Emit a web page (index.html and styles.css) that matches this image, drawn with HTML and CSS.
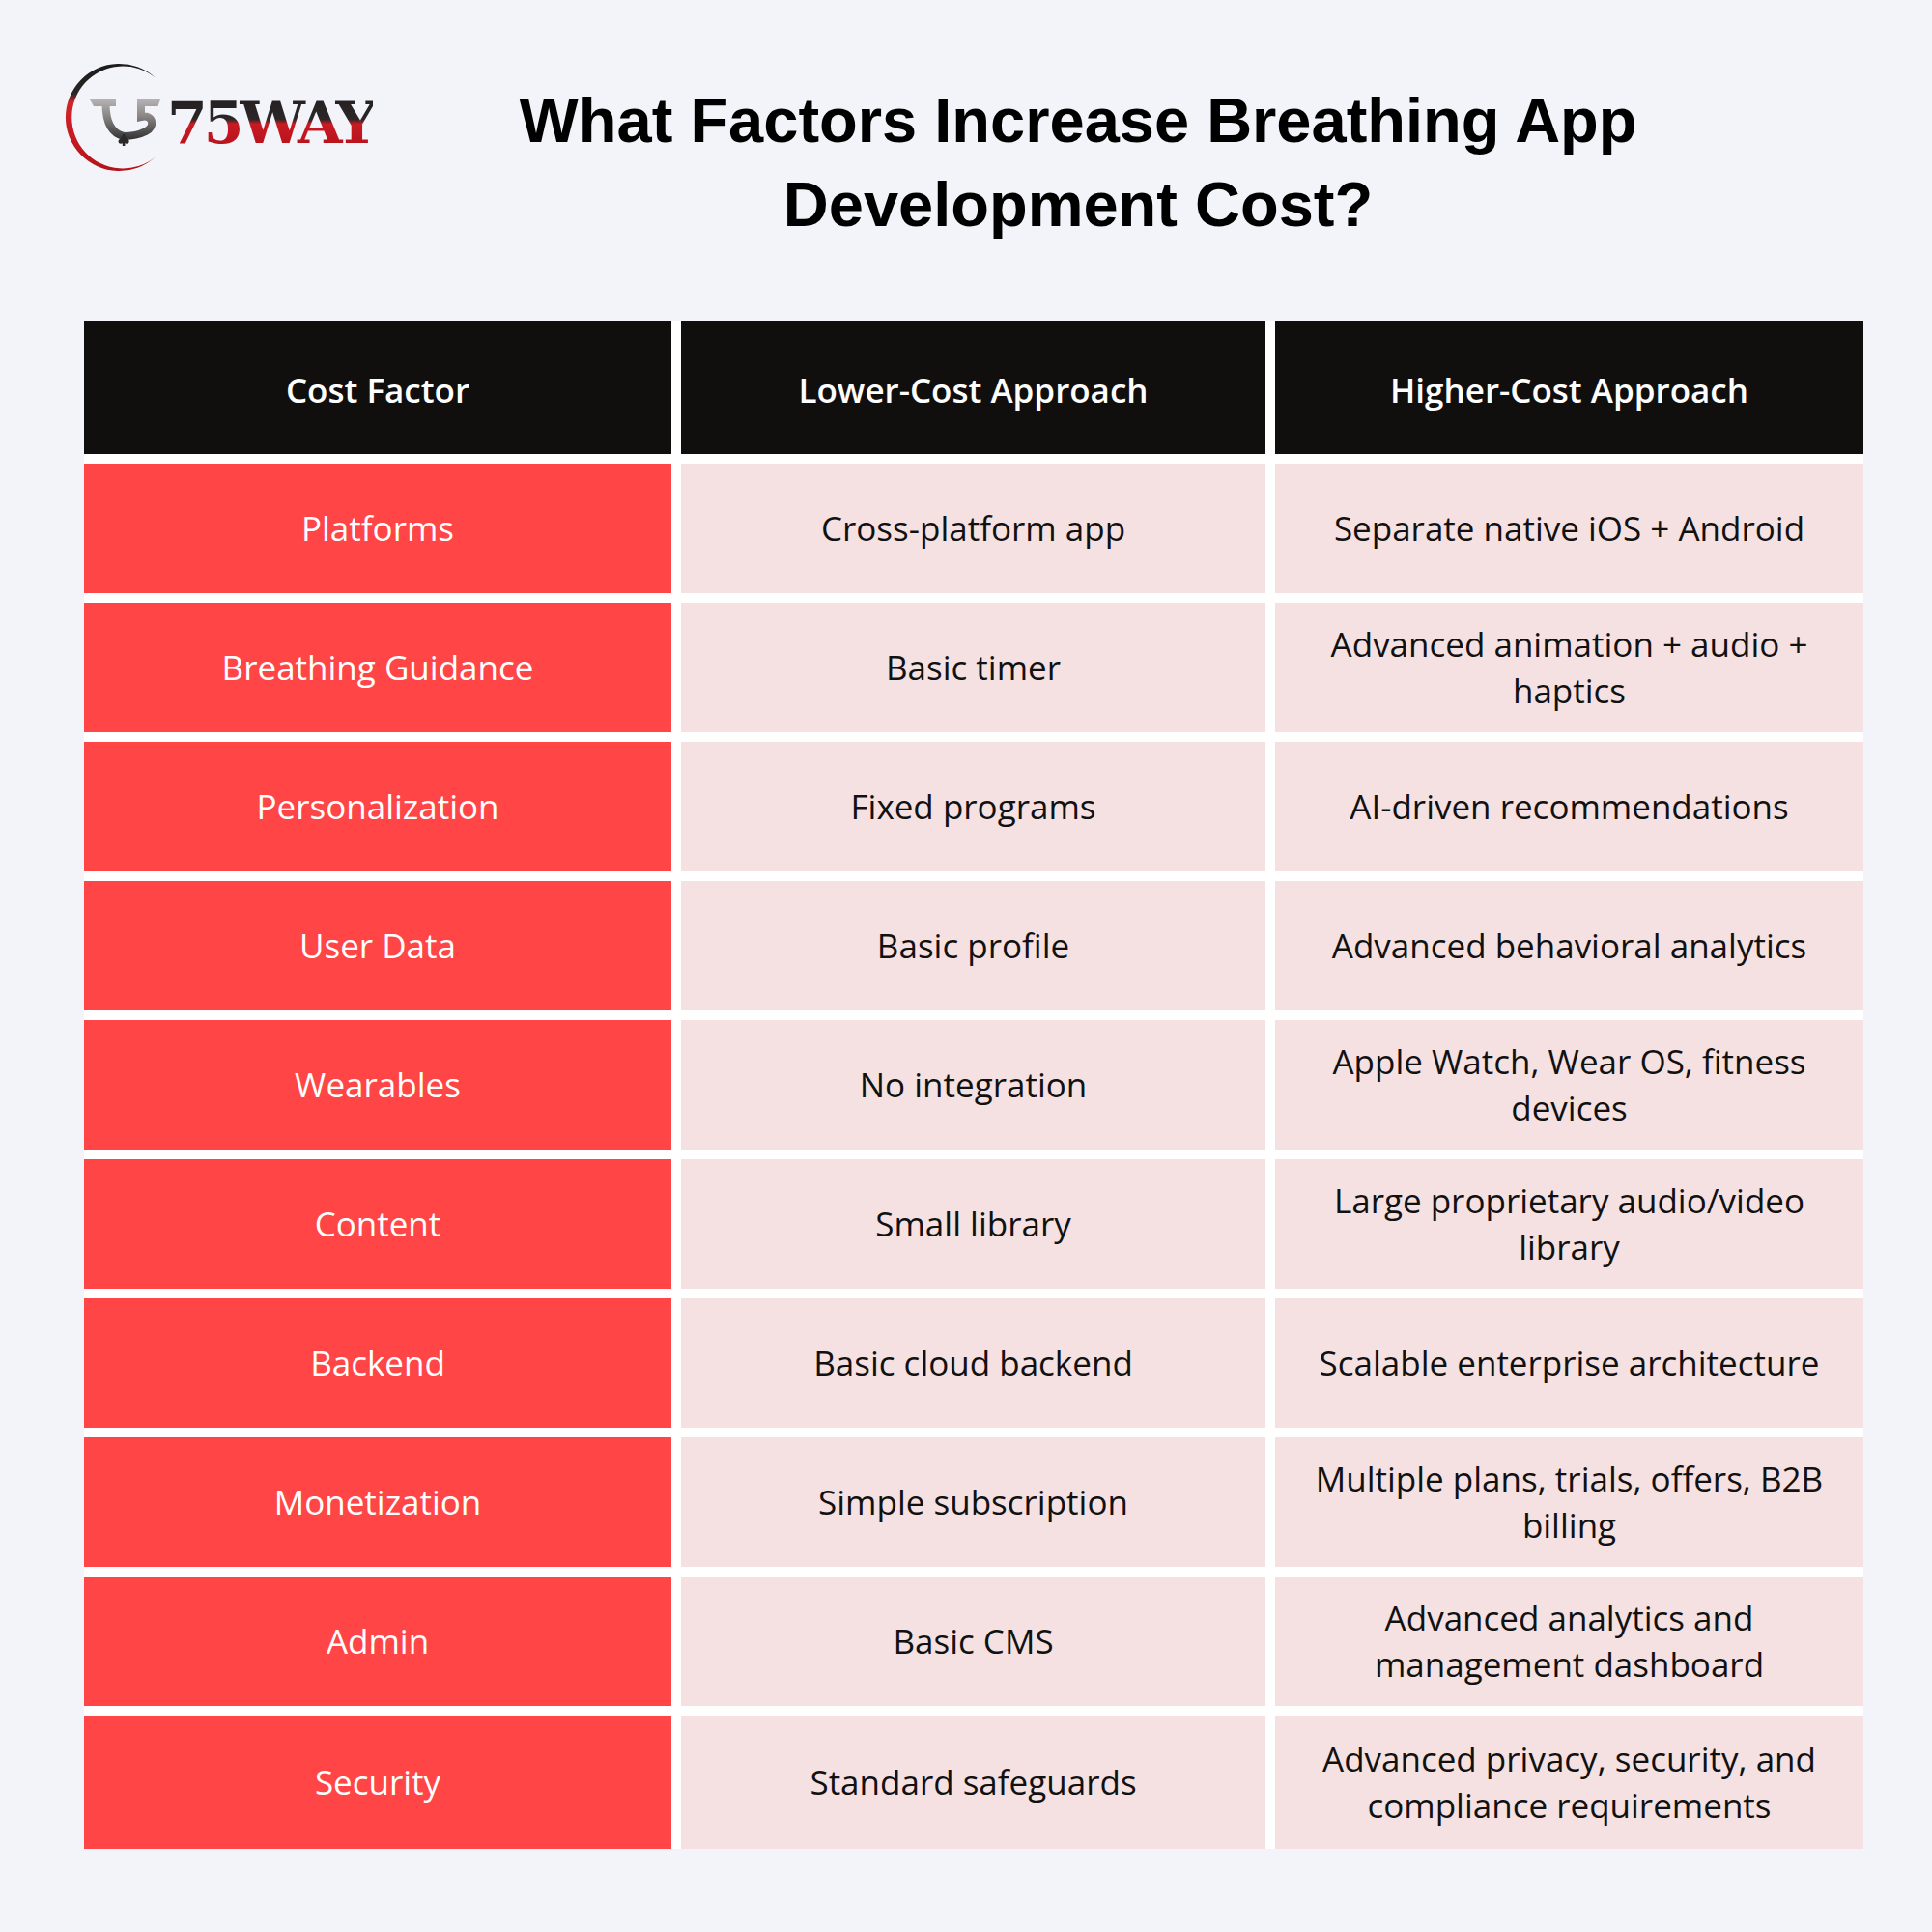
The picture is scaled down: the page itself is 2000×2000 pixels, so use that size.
FILE: index.html
```html
<!DOCTYPE html>
<html lang="en">
<head>
<meta charset="utf-8">
<title>What Factors Increase Breathing App Development Cost?</title>
<link rel="stylesheet" href="styles.css">
</head>
<body>
<div class="page">
  <header class="header">
    <div class="logo">
      <svg class="logo-mark" width="115" height="125" viewBox="60 60 115 125" xmlns="http://www.w3.org/2000/svg">
        <defs>
          <linearGradient id="ring" gradientUnits="userSpaceOnUse" x1="0" y1="66" x2="0" y2="177">
            <stop offset="0" stop-color="#1d1b1c"/>
            <stop offset="0.28" stop-color="#2a2627"/>
            <stop offset="0.36" stop-color="#d3232b"/>
            <stop offset="1" stop-color="#b5121a"/>
          </linearGradient>
          <linearGradient id="mark" gradientUnits="userSpaceOnUse" x1="0" y1="102" x2="0" y2="146">
            <stop offset="0" stop-color="#bab6b6"/>
            <stop offset="0.4" stop-color="#8c8888"/>
            <stop offset="1" stop-color="#2e2c2c"/>
          </linearGradient>
        </defs>
        <path d="M160.6 80.3 A55.5 55.5 0 1 0 160.6 162.7 A53 53 0 1 1 160.6 80.3 Z" fill="url(#ring)"/>
        <g fill="url(#mark)" stroke="none">
          <polygon points="93,103 120,103 120,110 97,110"/>
          <polygon points="142,103 166,103 163.5,110 142,110"/>
        </g>
        <g fill="none" stroke="url(#mark)" stroke-width="8" stroke-linecap="butt">
          <path d="M109.5 107 C109.5 126 115.5 138 128 141"/>
          <path d="M146 107 L146 121 C158.5 118 161 131 151 136 C145 139 136.5 141 128 141"/>
        </g>
        <g fill="#2b2929">
          <rect x="126.8" y="139" width="2.6" height="12"/>
          <circle cx="128.1" cy="143.5" r="2.8"/>
          <circle cx="125.1" cy="146.3" r="2.5"/>
          <circle cx="131.1" cy="146.3" r="2.5"/>
        </g>
      </svg>
      <span class="logo-text">75WAY</span>
    </div>
    <h1 class="title">What Factors Increase Breathing App<br>Development Cost?</h1>
  </header>

  <div class="table">
    <div class="cell head">Cost Factor</div>
    <div class="cell head">Lower-Cost Approach</div>
    <div class="cell head">Higher-Cost Approach</div>

    <div class="cell factor">Platforms</div>
    <div class="cell value">Cross-platform app</div>
    <div class="cell value">Separate native iOS + Android</div>

    <div class="cell factor">Breathing Guidance</div>
    <div class="cell value">Basic timer</div>
    <div class="cell value">Advanced animation + audio +<br>haptics</div>

    <div class="cell factor">Personalization</div>
    <div class="cell value">Fixed programs</div>
    <div class="cell value">AI-driven recommendations</div>

    <div class="cell factor">User Data</div>
    <div class="cell value">Basic profile</div>
    <div class="cell value">Advanced behavioral analytics</div>

    <div class="cell factor">Wearables</div>
    <div class="cell value">No integration</div>
    <div class="cell value">Apple Watch, Wear OS, fitness<br>devices</div>

    <div class="cell factor">Content</div>
    <div class="cell value">Small library</div>
    <div class="cell value">Large proprietary audio/video<br>library</div>

    <div class="cell factor">Backend</div>
    <div class="cell value">Basic cloud backend</div>
    <div class="cell value">Scalable enterprise architecture</div>

    <div class="cell factor">Monetization</div>
    <div class="cell value">Simple subscription</div>
    <div class="cell value">Multiple plans, trials, offers, B2B<br>billing</div>

    <div class="cell factor">Admin</div>
    <div class="cell value">Basic CMS</div>
    <div class="cell value">Advanced analytics and<br>management dashboard</div>

    <div class="cell factor">Security</div>
    <div class="cell value">Standard safeguards</div>
    <div class="cell value">Advanced privacy, security, and<br>compliance requirements</div>
  </div>
</div>
</body>
</html>
```

FILE: styles.css
```css
html, body {
  margin: 0;
  padding: 0;
}

body {
  background: #f3f4f9;
  font-family: "Open Sans", "Noto Sans", sans-serif;
}

.page {
  width: 2000px;
  min-height: 2000px;
}

.header {
  display: flex;
  align-items: flex-start;
  height: 332px;
}

.logo {
  display: flex;
  align-items: center;
  width: 330px;
  margin-left: 60px;
  margin-top: 60px;
}

.logo-mark {
  display: block;
  flex: none;
}

.logo-text {
  margin-left: -2px;
  margin-top: 8px;
  font-family: "DejaVu Serif", "Liberation Serif", serif;
  font-weight: 700;
  font-size: 60px;
  line-height: 60px;
  letter-spacing: -4px;
  background: linear-gradient(to bottom, #231f20 0%, #2b2627 44%, #c81b23 52%, #b3111a 100%);
  -webkit-background-clip: text;
  background-clip: text;
  color: transparent;
}

.title {
  margin: 81px 0 0 30px;
  width: 1392px;
  font-family: "Liberation Sans", Arial, sans-serif;
  font-weight: 700;
  font-size: 65px;
  line-height: 87px;
  text-align: center;
  color: #000;
}

.table {
  display: grid;
  grid-template-columns: 608px 605px 609px;
  grid-template-rows: 138px repeat(9, 134px) 138px;
  gap: 10px;
  margin-left: 87px;
  width: 1842px;
  background: #ffffff;
}

.cell {
  display: flex;
  align-items: center;
  justify-content: center;
  text-align: center;
  padding: 0 16px;
  font-size: 35px;
  line-height: 48px;
}

.head {
  background: #110f0e;
  color: #ffffff;
  font-weight: 600;
  padding-top: 6px;
}

.factor {
  background: #ff4545;
  color: #ffffff;
}

.value {
  background: #f5e1e2;
  color: #111111;
}
```
